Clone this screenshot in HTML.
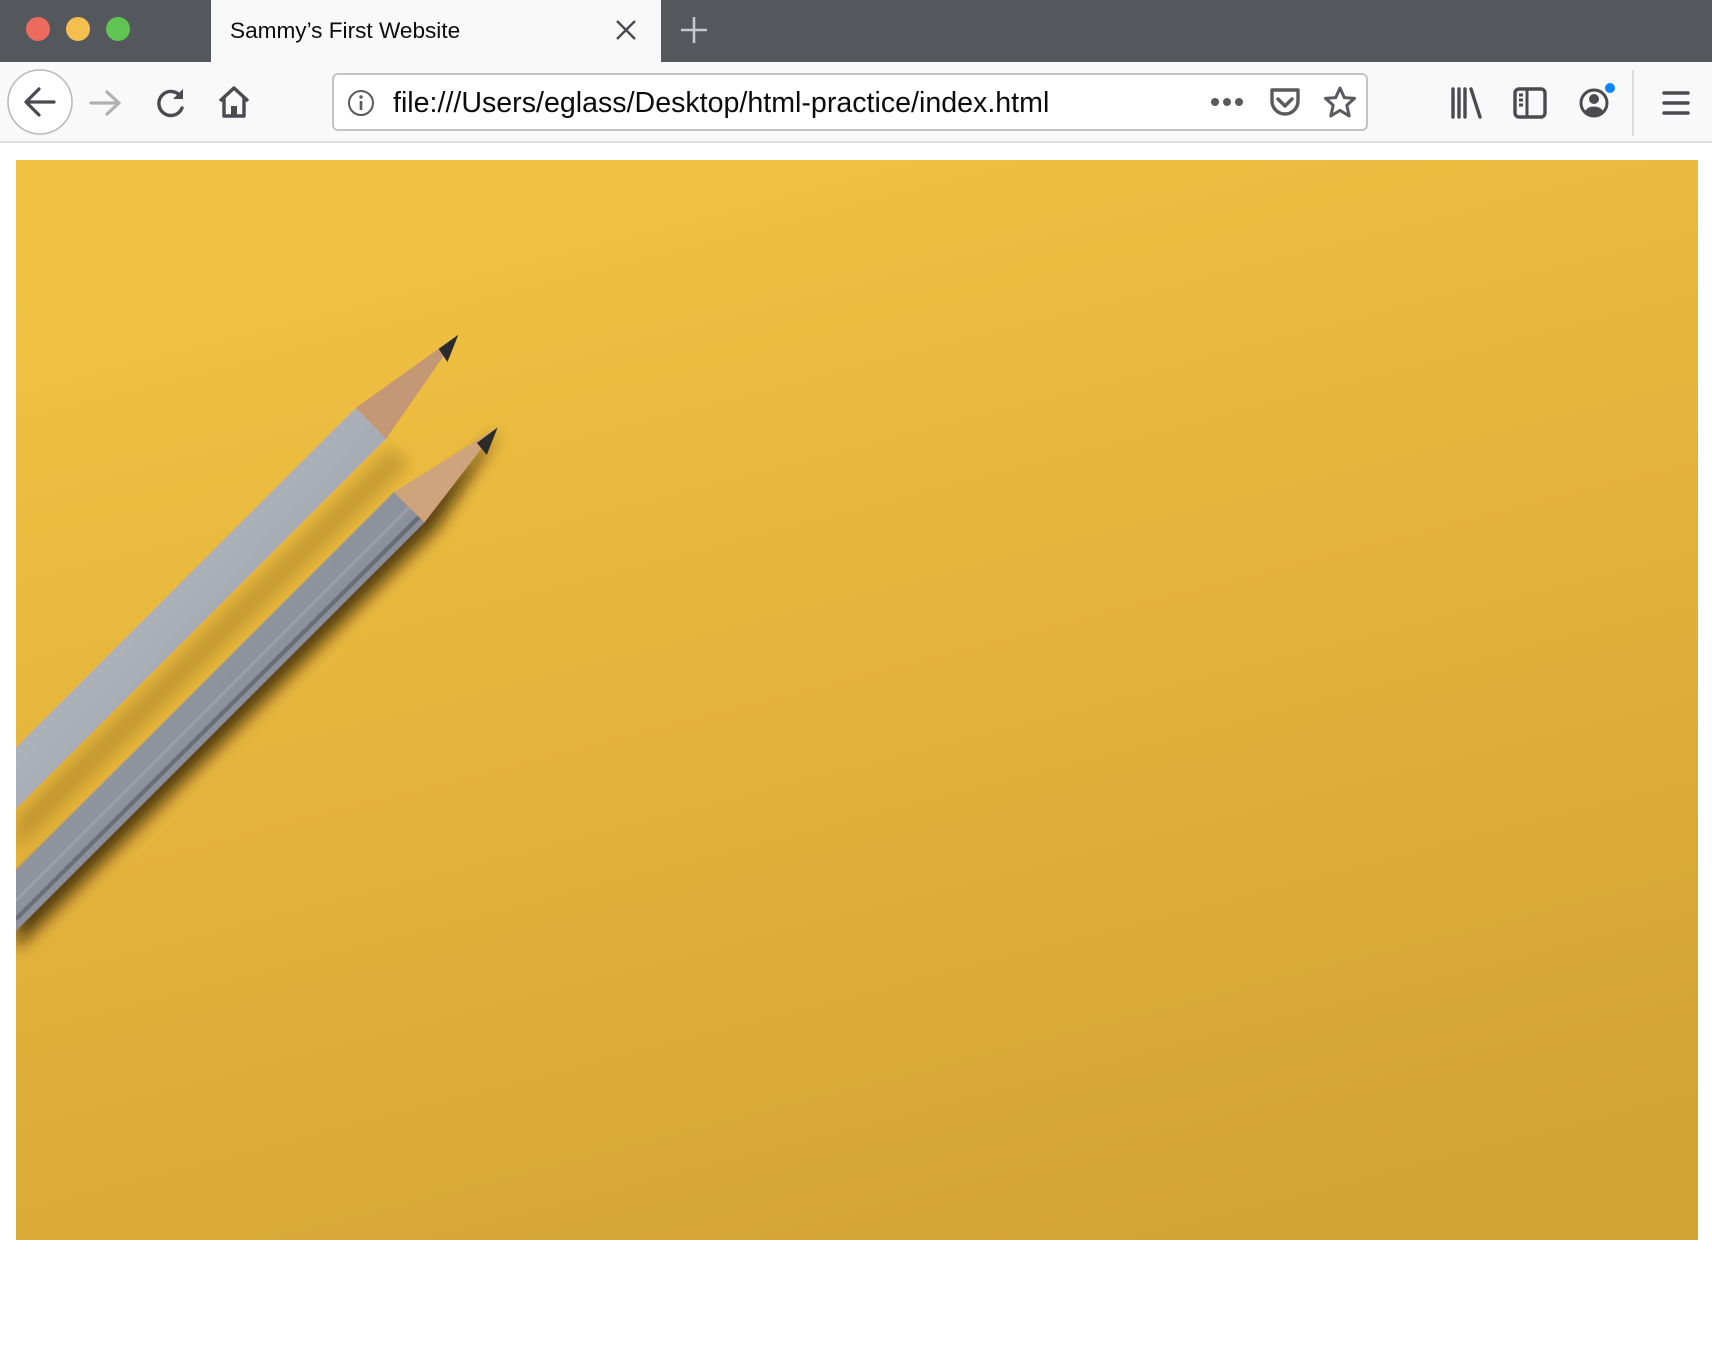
<!DOCTYPE html>
<html><head><meta charset="utf-8"><style>
*{margin:0;padding:0;box-sizing:border-box}
body{width:1712px;height:1372px;background:#fff;position:relative;overflow:hidden;font-family:"Liberation Sans",sans-serif}
.tabbar{position:absolute;left:0;top:0;width:1712px;height:62px;background:#54575c}
.dot{position:absolute;top:17px;width:24px;height:24px;border-radius:50%}
.tab{position:absolute;left:211px;top:0;width:450px;height:62px;background:#f9f9fa}
.tab .t{position:absolute;left:19px;top:18px;font-size:22.6px;color:#0c0c0d}
.toolbar{position:absolute;left:0;top:62px;width:1712px;height:81px;background:#f9f9fa;border-bottom:2px solid #e1e1e3}
.url{position:absolute;left:332px;top:11px;width:1036px;height:58px;background:#fff;border:2px solid #c4c4c6;border-radius:6px}
.url .t{position:absolute;left:59px;top:12px;font-size:28.6px;color:#0c0c0d}
svg.i{position:absolute}
</style></head><body>
<div class="tabbar">
<div class="dot" style="left:26px;background:#ec6a5e"></div>
<div class="dot" style="left:66px;background:#f4bf4f"></div>
<div class="dot" style="left:106px;background:#61c554"></div>
<div class="tab"><div class="t">Sammy’s First Website</div>
<svg class="i" style="left:404px;top:19px" width="22" height="22" viewBox="0 0 22 22"><path d="M2 2L20 20M20 2L2 20" stroke="#4a4a4f" stroke-width="2.4"/></svg></div>
<svg class="i" style="left:680px;top:16px" width="28" height="28" viewBox="0 0 28 28"><path d="M14 1V27M1 14H27" stroke="#c8c8ca" stroke-width="2.6"/></svg>
</div>
<div class="toolbar">
<svg class="i" style="left:6px;top:6px" width="70" height="70" viewBox="0 0 70 70"><circle cx="34" cy="34" r="32" fill="#fff" stroke="#b8b8ba" stroke-width="1.5"/><path d="M48 34H21M33 21L20 34L33 47" fill="none" stroke="#4a4a4f" stroke-width="3.2" stroke-linecap="round" stroke-linejoin="round"/></svg>
<svg class="i" style="left:88px;top:26px" width="36" height="30" viewBox="0 0 36 30"><path d="M3 15H31M19 4L31 15L19 26" fill="none" stroke="#b1b1b3" stroke-width="3.2" stroke-linecap="round" stroke-linejoin="round"/></svg>
<svg class="i" style="left:154px;top:24px" width="34" height="34" viewBox="0 0 34 34"><path d="M27 11A12 12 0 1 0 28 22" fill="none" stroke="#4a4a4f" stroke-width="3.4" stroke-linecap="round"/><path d="M29 3V13H19Z" fill="#4a4a4f"/></svg>
<svg class="i" style="left:216px;top:22px" width="36" height="36" viewBox="0 0 36 36"><path d="M4 17L18 4L32 17M8 14V32H28V14" fill="none" stroke="#4a4a4f" stroke-width="3.4" stroke-linejoin="round"/><rect x="15" y="22" width="6" height="10" fill="#4a4a4f"/></svg>
<div class="url">
<svg class="i" style="left:13px;top:14px" width="28" height="28" viewBox="0 0 28 28"><circle cx="14" cy="14" r="12" fill="none" stroke="#5a5a5e" stroke-width="2"/><rect x="12.7" y="12" width="2.6" height="9" fill="#5a5a5e"/><circle cx="14" cy="8" r="1.7" fill="#5a5a5e"/></svg>
<div class="t">file:///Users/eglass/Desktop/html-practice/index.html</div>
<svg class="i" style="left:876px;top:20px" width="34" height="14" viewBox="0 0 34 14"><circle cx="5" cy="7" r="4" fill="#5a5a5e"/><circle cx="17" cy="7" r="4" fill="#5a5a5e"/><circle cx="29" cy="7" r="4" fill="#5a5a5e"/></svg>
<svg class="i" style="left:934px;top:11px" width="34" height="34" viewBox="0 0 34 34"><path d="M4 4H30V15A13 13 0 0 1 4 15Z" fill="none" stroke="#5a5a5e" stroke-width="3.4" stroke-linejoin="round"/><path d="M10 13L17 20L24 13" fill="none" stroke="#5a5a5e" stroke-width="3.4" stroke-linecap="round" stroke-linejoin="round"/></svg>
<svg class="i" style="left:988px;top:10px" width="36" height="36" viewBox="0 0 36 36"><path d="M18 3L22.3 12.6L32.5 13.4L24.8 20.2L27.2 31L18 25.4L8.8 31L11.2 20.2L3.5 13.4L13.7 12.6Z" fill="none" stroke="#5a5a5e" stroke-width="3" stroke-linejoin="round"/></svg>
</div>
<svg class="i" style="left:1450px;top:24px" width="34" height="34" viewBox="0 0 34 34"><path d="M3 3V31M9 3V31M15 3V31M21 3L30 31" stroke="#4a4a4f" stroke-width="3.4" stroke-linecap="round"/></svg>
<svg class="i" style="left:1513px;top:25px" width="34" height="32" viewBox="0 0 34 32"><rect x="2" y="2" width="30" height="28" rx="4" fill="none" stroke="#4a4a4f" stroke-width="3.4"/><path d="M14 2V30M6 8H10M6 13H10M6 18H10" stroke="#4a4a4f" stroke-width="3"/></svg>
<svg class="i" style="left:1578px;top:20px" width="40" height="40" viewBox="0 0 40 40"><circle cx="16" cy="21" r="13" fill="none" stroke="#4a4a4f" stroke-width="3"/><circle cx="16" cy="17" r="5" fill="#4a4a4f"/><path d="M7 29A10 8 0 0 1 25 29A13 13 0 0 1 7 29Z" fill="#4a4a4f"/><circle cx="32" cy="6" r="5" fill="#0a84ff"/></svg>
<div style="position:absolute;left:1632px;top:8px;width:2px;height:66px;background:#dcdcde"></div>
<svg class="i" style="left:1662px;top:28px" width="28" height="26" viewBox="0 0 28 26"><path d="M2 3H26M2 13H26M2 23H26" stroke="#4a4a4f" stroke-width="3.4" stroke-linecap="round"/></svg>
</div>
<svg style="position:absolute;left:16px;top:160px" width="1682" height="1080" viewBox="15 147 1540 989" preserveAspectRatio="none">
<defs>
<linearGradient id="bg" x1="0.3" y1="0" x2="0.7" y2="1"><stop offset="0" stop-color="#f1c242"/><stop offset="0.5" stop-color="#e3b23b"/><stop offset="1" stop-color="#d2a436"/></linearGradient>
<linearGradient id="p1" x1="0" y1="0" x2="1" y2="1"><stop offset="0" stop-color="#c3c6cd"/><stop offset="0.5" stop-color="#a9adb6"/><stop offset="1" stop-color="#858a95"/></linearGradient>
<linearGradient id="p2" x1="0" y1="0" x2="1" y2="1"><stop offset="0" stop-color="#a5aab4"/><stop offset="0.5" stop-color="#8c919b"/><stop offset="1" stop-color="#60646d"/></linearGradient>
<filter id="bl"><feGaussianBlur stdDeviation="7"/></filter>
</defs>
<rect x="15" y="147" width="1540" height="989" fill="url(#bg)"/>
<polygon points="358,410 375,425 15,780 15,750" fill="#5a4010" opacity="0.25" filter="url(#bl)"/>
<polygon points="458,395 400,485 15,870 15,810" fill="#1a1005" opacity="0.7" filter="url(#bl)"/>
<polygon points="326,374 354,402 15,741 15,685" fill="url(#p1)"/>
<polygon points="326,374 354,402 420,307" fill="#c49775"/>
<polygon points="402,320 410,332 420,307" fill="#2b2b2b"/>
<polygon points="361,451 389,479 15,853 15,797" fill="url(#p2)"/>
<path d="M15 825L375 465" stroke="#a2a7b1" stroke-width="3" opacity="0.6"/>
<path d="M15 842L384 474" stroke="#4a4e56" stroke-width="4" opacity="0.5"/>
<polygon points="361,451 389,479 456,392" fill="#cfa37b"/>
<polygon points="437,406 446,417 456,392" fill="#2b2b2b"/>
</svg>
</body></html>
